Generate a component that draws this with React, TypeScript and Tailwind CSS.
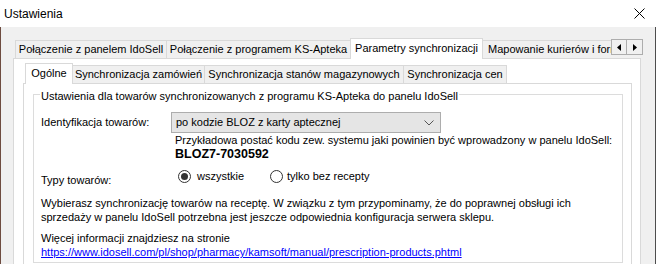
import React from "react";

function OuterTab({ label, width, selected }: { label: string; width: number; selected?: boolean }) {
  if (selected) {
    return (
      <div
        className="relative z-10 -ml-px -mb-px flex h-[21px] shrink-0 items-center justify-center border border-b-0 border-[#d9d9d9] bg-white pb-[2px] whitespace-nowrap"
        style={{ width }}
      >
        {label}
      </div>
    );
  }
  return (
    <div
      className="-ml-px flex h-[18px] shrink-0 items-center justify-center overflow-hidden border border-b-0 border-[#d9d9d9] bg-[#f0f0f0] whitespace-nowrap"
      style={{ width }}
    >
      {label}
    </div>
  );
}

function Radio({ checked }: { checked?: boolean }) {
  return (
    <span className="flex h-[13px] w-[13px] shrink-0 items-center justify-center rounded-full border border-[#333333] bg-white">
      {checked && <span className="h-[7px] w-[7px] rounded-full bg-[#333333]" />}
    </span>
  );
}

export default function App() {
  return (
    <div className="h-[264px] w-[656px] overflow-hidden bg-[#f0f0f0] font-['Liberation_Sans',Arial,sans-serif] text-[11px] leading-[13px] text-black">
      {/* Title bar */}
      <div className="flex h-[27px] items-center justify-between bg-white pl-[4px] pr-[10px]">
        <span className="text-[12px] leading-[14px]">Ustawienia</span>
        <svg width="11" height="11" viewBox="0 0 11 11" className="mr-[1px]">
          <path d="M0.5 0.5 L10.5 10.5 M10.5 0.5 L0.5 10.5" stroke="#000" strokeWidth="1" fill="none" />
        </svg>
      </div>

      {/* Body */}
      <div className="h-[237px] border-l border-r border-l-[#6e4c40] border-r-[#4d4d4d] pl-[12px] pt-[11px]">
        {/* Outer tabs */}
        <div className="ml-[3px] flex h-[20px] items-end">
          <OuterTab label="Połączenie z panelem IdoSell" width={152} />
          <OuterTab label="Połączenie z programem KS-Apteka" width={185} />
          <OuterTab label="Parametry synchronizacji" width={133} selected />
          <div className="-ml-px flex h-[18px] w-[129px] shrink-0 items-center overflow-hidden border border-b-0 border-r-0 border-[#d9d9d9] bg-[#f0f0f0] pl-[5px] whitespace-nowrap">
            Mapowanie kurierów i form
          </div>
          <div className="mb-[3px] flex h-[16px] shrink-0 self-end">
            <div className="flex h-[16px] w-[16px] items-center justify-center border border-[#adadad] bg-[#f0f0f0]">
              <svg width="4" height="7" viewBox="0 0 4 7">
                <path d="M4 0 L0 3.5 L4 7 Z" fill="#000" />
              </svg>
            </div>
            <div className="-ml-px flex h-[16px] w-[17px] items-center justify-center border border-[#adadad] bg-[#f0f0f0]">
              <svg width="4" height="7" viewBox="0 0 4 7">
                <path d="M0 0 L4 3.5 L0 7 Z" fill="#000" />
              </svg>
            </div>
          </div>
        </div>

        {/* Outer panel */}
        <div className="h-[300px] w-[628px] border border-[#d9d9d9] bg-white pl-[9px] pr-[8px] pt-[4px]">
          {/* Inner tabs */}
          <div className="ml-[2px] flex h-[20px] items-end">
            <div className="relative z-10 -mb-px flex h-[21px] w-[48px] shrink-0 items-center justify-center border border-b-0 border-[#d9d9d9] bg-white pb-[1px]">
              Ogólne
            </div>
            <div className="-ml-px flex h-[18px] w-[133px] shrink-0 items-center justify-center border border-b-0 border-[#d9d9d9] bg-[#f0f0f0] whitespace-nowrap">
              Synchronizacja zamówień
            </div>
            <div className="-ml-px flex h-[18px] w-[200px] shrink-0 items-center justify-center border border-b-0 border-[#d9d9d9] bg-[#f0f0f0] whitespace-nowrap">
              Synchronizacja stanów magazynowych
            </div>
            <div className="-ml-px flex h-[18px] w-[104px] shrink-0 items-center justify-center border border-b-0 border-[#d9d9d9] bg-[#f0f0f0] whitespace-nowrap">
              Synchronizacja cen
            </div>
          </div>

          {/* Inner panel */}
          <div className="h-[300px] w-[609px] border border-[#d9d9d9] bg-white pl-[9px] pt-[10px]">
            {/* Group box */}
            <div className="relative h-[169px] w-[590px] border border-[#dcdcdc] pl-[7px] pt-[17px]">
              <span className="absolute left-[6px] top-[-5px] bg-white px-[1px]">
                Ustawienia dla towarów synchronizowanych z programu KS-Apteka do panelu IdoSell
              </span>

              <div className="flex items-center">
                <span className="w-[130px] shrink-0">Identyfikacja towarów:</span>
                <div className="flex h-[21px] w-[270px] items-center justify-between border border-[#adadad] bg-[#e5e5e5] pl-[4px] pr-[6px]">
                  <span>po kodzie BLOZ z karty aptecznej</span>
                  <svg width="10" height="6" viewBox="0 0 10 6">
                    <path d="M0.5 0.5 L5 5 L9.5 0.5" stroke="#555" strokeWidth="1" fill="none" />
                  </svg>
                </div>
              </div>

              <div className="ml-[134px] mt-[1px]">
                <div>Przykładowa postać kodu zew. systemu jaki powinien być wprowadzony w panelu IdoSell:</div>
                <div className="text-[12.5px] font-bold leading-[14px]">BLOZ7-7030592</div>
              </div>

              <div className="mt-[9px] flex items-start">
                <span className="mt-[4px] w-[137px] shrink-0">Typy towarów:</span>
                <div className="flex w-[92px] items-center gap-[6px]">
                  <Radio checked />
                  <span>wszystkie</span>
                </div>
                <div className="flex items-center gap-[4px]">
                  <Radio />
                  <span>tylko bez recepty</span>
                </div>
              </div>

              <p className="mt-[9px] leading-[14px]">
                Wybierasz synchronizację towarów na receptę. W związku z tym przypominamy, że do poprawnej obsługi ich
                <br />
                sprzedaży w panelu IdoSell potrzebna jest jeszcze odpowiednia konfiguracja serwera sklepu.
              </p>

              <p className="mt-[7px] leading-[14px]">
                Więcej informacji znajdziesz na stronie
                <br />
                <a className="text-[#0000ff] underline" href="#">
                  https://www.idosell.com/pl/shop/pharmacy/kamsoft/manual/prescription-products.phtml
                </a>
              </p>
            </div>
          </div>
        </div>
      </div>
    </div>
  );
}
